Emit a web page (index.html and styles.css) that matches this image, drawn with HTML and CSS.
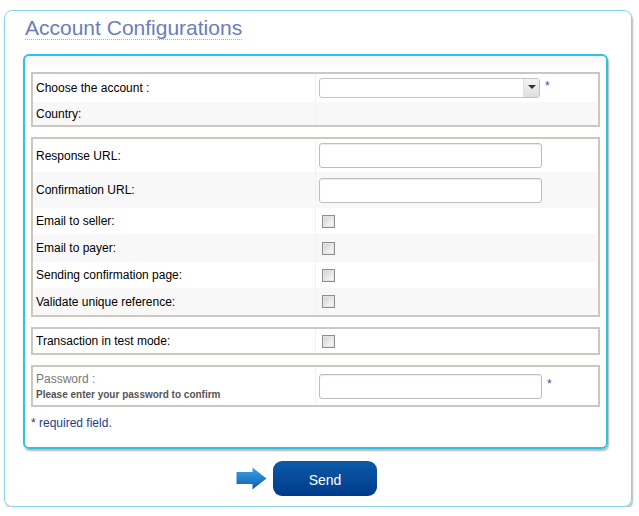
FILE: index.html
```html
<!DOCTYPE html>
<html>
<head>
<meta charset="utf-8">
<link rel="stylesheet" href="styles.css">
</head>
<body>
<div class="page">
  <h1 class="title">Account Configurations</h1>
  <div class="panel">
    <div class="group">
      <div class="row h28"><div class="lbl">Choose the account :</div><div class="val"><div class="select"><span class="sel-btn"></span></div><span class="req">*</span></div></div>
      <div class="row alt h23"><div class="lbl">Country:</div><div class="val"></div></div>
    </div>
    <div class="group">
      <div class="row h33"><div class="lbl">Response URL:</div><div class="val"><input class="txt" type="text"></div></div>
      <div class="row alt h36"><div class="lbl">Confirmation URL:</div><div class="val"><input class="txt" type="text"></div></div>
      <div class="row h26"><div class="lbl">Email to seller:</div><div class="val"><input class="chk" type="checkbox"></div></div>
      <div class="row alt h28"><div class="lbl">Email to payer:</div><div class="val"><input class="chk" type="checkbox"></div></div>
      <div class="row h26"><div class="lbl">Sending confirmation page:</div><div class="val"><input class="chk" type="checkbox"></div></div>
      <div class="row alt h27"><div class="lbl">Validate unique reference:</div><div class="val"><input class="chk" type="checkbox"></div></div>
    </div>
    <div class="group">
      <div class="row h24"><div class="lbl">Transaction in test mode:</div><div class="val"><input class="chk" type="checkbox"></div></div>
    </div>
    <div class="group">
      <div class="row h38"><div class="lbl pw"><span class="pw-label">Password :</span><span class="pw-hint">Please enter your password to confirm</span></div><div class="val"><input class="txt" type="password"><span class="req">*</span></div></div>
    </div>
    <p class="note">* required field.</p>
  </div>
  <div class="actions">
    <svg class="arrow" width="31" height="23" viewBox="0 0 31 23">
      <defs>
        <linearGradient id="ag" x1="0" y1="0" x2="0" y2="1">
          <stop offset="0" stop-color="#3ea3e6"/>
          <stop offset="1" stop-color="#0a5db0"/>
        </linearGradient>
      </defs>
      <path d="M0.5 5 H16.5 V0.5 L30.5 11.5 L16.5 22.5 V17 H0.5 Z" fill="url(#ag)"/>
    </svg>
    <button class="send" type="button">Send</button>
  </div>
</div>
</body>
</html>
```
FILE: styles.css
```css
html, body {
  margin: 0;
  padding: 0;
  background: #fff;
}
body {
  font-family: "Liberation Sans", Arial, sans-serif;
  font-size: 12px;
  color: #000;
}
.page {
  box-sizing: border-box;
  width: 628px;
  height: 497px;
  margin: 10px 0 0 4px;
  border: 1px solid #86d8e8;
  border-radius: 8px;
  box-shadow: 1px 2px 2px #b9b9b9;
  padding: 6px 0 0 20px;
}
.title {
  display: inline-block;
  margin: 0;
  font-size: 21px;
  line-height: 22px;
  font-weight: normal;
  color: #6a7eb8;
  border-bottom: 1px dotted #9fb0d0;
}
.panel {
  box-sizing: border-box;
  width: 585px;
  height: 395px;
  margin: 14px 0 0 -2px;
  border: 2px solid #2ec3e2;
  border-radius: 6px;
  box-shadow: 1px 2px 2px #b5b5b5;
  background: linear-gradient(#f8f8f8, #fff 14px);
  padding: 16px 6px 0 6px;
}
.group {
  border: 2px solid #ccc8c0;
  margin-bottom: 10px;
  padding-right: 1px;
}
.row {
  display: grid;
  grid-template-columns: 283px 1fr;
  background: #fff;
}
.row.alt {
  background: #f8f8f8;
}
.h23 { height: 23px; }
.h24 { height: 24px; }
.h26 { height: 26px; }
.h27 { height: 27px; }
.h28 { height: 28px; }
.h33 { height: 33px; }
.h36 { height: 36px; }
.h38 { height: 38px; }
.lbl {
  box-sizing: border-box;
  display: flex;
  align-items: center;
  padding-left: 3px;
  border-right: 1px solid #f1f1f1;
  line-height: 14px;
}
.val {
  display: flex;
  align-items: center;
  padding-left: 3px;
}
.pw {
  flex-direction: column;
  align-items: flex-start;
  justify-content: center;
}
.pw-label {
  color: #777;
  line-height: 14px;
}
.pw-hint {
  margin-top: 3px;
  font-size: 10px;
  line-height: 12px;
  font-weight: bold;
  color: #555;
}
.select {
  box-sizing: border-box;
  width: 221px;
  height: 20px;
  border: 1px solid #c4c4c4;
  border-radius: 3px;
  background: #fff;
  display: flex;
  justify-content: flex-end;
}
.sel-btn {
  width: 15px;
  height: 18px;
  background: linear-gradient(#f4f4f4, #dedede);
  border-left: 1px solid #e2e2e2;
  border-radius: 0 2px 2px 0;
  display: flex;
  align-items: center;
  justify-content: center;
}
.sel-btn::after {
  content: "";
  width: 0;
  height: 0;
  border-left: 4px solid transparent;
  border-right: 4px solid transparent;
  border-top: 4px solid #333;
  margin-top: -2px;
}
.txt {
  box-sizing: border-box;
  width: 223px;
  height: 25px;
  margin: 0;
  border: 1px solid #bdbdbd;
  border-radius: 3px;
  background: #fff;
  box-shadow: inset 0 1px 1px #ececec;
  font: inherit;
}
.chk {
  appearance: none;
  -webkit-appearance: none;
  box-sizing: border-box;
  width: 13px;
  height: 13px;
  margin: 0 0 0 3px;
  border: 1px solid #8e8e8e;
  background: linear-gradient(135deg, #cfcfcf, #f6f6f6 80%);
  box-shadow: inset 0 0 0 1px #e4e4e4;
}
.req {
  margin-left: 5px;
  margin-top: -5px;
  color: #3450a8;
  font-size: 12px;
  line-height: 14px;
}
.note {
  margin: -1px 0 0 0;
  color: #1d3c8f;
  line-height: 14px;
}
.actions {
  display: flex;
  align-items: center;
  margin: 12px 0 0 211px;
}
.arrow {
  display: block;
  margin-right: 6px;
}
.send {
  width: 104px;
  height: 35px;
  border: 0;
  border-radius: 9px;
  background: linear-gradient(#0b5aa8, #003b8b);
  color: #fff;
  font-family: "Liberation Sans", Arial, sans-serif;
  font-size: 14px;
  padding: 2px 0 0 0;
  cursor: pointer;
}
```
